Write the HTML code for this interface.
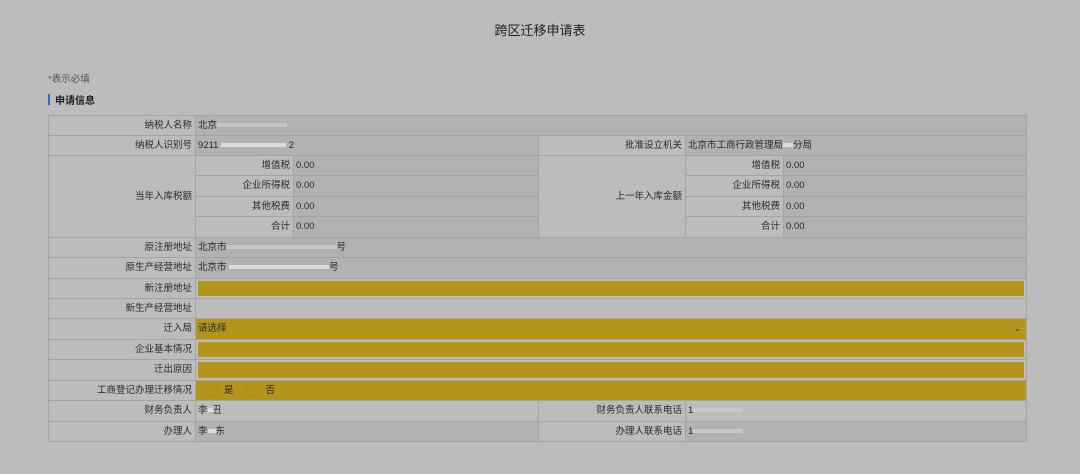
<!DOCTYPE html><html><head><meta charset="utf-8"><style>
body{margin:0;width:1080px;height:474px;background:#bcbcbc;font-family:"Liberation Sans","Noto Sans CJK SC",sans-serif;position:relative;overflow:hidden;color:#2a2a2a}
.c{position:absolute;box-sizing:border-box;border:1px solid #a4a4a4;font-size:9.5px;line-height:19px;white-space:nowrap;overflow:hidden}
.l{text-align:right;padding-right:3px;background:#bcbcbc}
.v{padding-left:2px;background:#bcbcbc}
.d{background:#b1b1b1}
.g{background:#b3951b}
.gi{position:absolute;left:2px;right:2px;top:2px;bottom:2px;background:#b3951b}
.w{display:inline-block;background:#dcdcdc;height:4px;vertical-align:middle}
</style></head><body>
<div style="position:absolute;top:20px;left:0;width:1080px;text-align:center;font-size:13px;color:#222">跨区迁移申请表</div>
<div style="position:absolute;top:71px;left:48px;font-size:9.5px;color:#555"><span style="color:#b33">*</span>表示必填</div>
<div style="position:absolute;top:94px;left:48px;width:2px;height:11px;background:#2b6fc0"></div>
<div style="position:absolute;top:92px;left:55px;font-size:10px;font-weight:bold;color:#222">申请信息</div>

<div class="c l" style="left:48px;top:115px;width:148px;height:21px">纳税人名称</div>
<div class="c v d" style="left:195px;top:115px;width:832px;height:21px">北京<span class="w" style="width:70px;background:#c4c4c4"></span></div>

<div class="c l" style="left:48px;top:135px;width:148px;height:21px">纳税人识别号</div>
<div class="c v d" style="left:195px;top:135px;width:344px;height:21px">9211 <span class="w" style="width:65px"></span> 2</div>
<div class="c l" style="left:538px;top:135px;width:148px;height:21px">批准设立机关</div>
<div class="c v d" style="left:685px;top:135px;width:342px;height:21px">北京市工商行政管理局<span class="w" style="width:10px"></span>分局</div>

<div class="c l" style="left:48px;top:155px;width:148px;height:83px;line-height:81px">当年入库税额</div>
<div class="c l" style="left:538px;top:155px;width:148px;height:83px;line-height:81px">上一年入库金额</div>

<div class="c l" style="left:195px;top:155px;width:99px;height:21px">增值税</div><div class="c v d" style="left:293px;top:155px;width:246px;height:21px">0.00</div>
<div class="c l" style="left:195px;top:175px;width:99px;height:22px">企业所得税</div><div class="c v d" style="left:293px;top:175px;width:246px;height:22px">0.00</div>
<div class="c l" style="left:195px;top:196px;width:99px;height:21px">其他税费</div><div class="c v d" style="left:293px;top:196px;width:246px;height:21px">0.00</div>
<div class="c l" style="left:195px;top:216px;width:99px;height:22px">合计</div><div class="c v d" style="left:293px;top:216px;width:246px;height:22px">0.00</div>
<div class="c l" style="left:685px;top:155px;width:99px;height:21px">增值税</div><div class="c v d" style="left:783px;top:155px;width:244px;height:21px">0.00</div>
<div class="c l" style="left:685px;top:175px;width:99px;height:22px">企业所得税</div><div class="c v d" style="left:783px;top:175px;width:244px;height:22px">0.00</div>
<div class="c l" style="left:685px;top:196px;width:99px;height:21px">其他税费</div><div class="c v d" style="left:783px;top:196px;width:244px;height:21px">0.00</div>
<div class="c l" style="left:685px;top:216px;width:99px;height:22px">合计</div><div class="c v d" style="left:783px;top:216px;width:244px;height:22px">0.00</div>

<div class="c l" style="left:48px;top:237px;width:148px;height:21px">原注册地址</div>
<div class="c v d" style="left:195px;top:237px;width:832px;height:21px">北京市<span class="w" style="width:110px;background:#c6c6c6"></span>号</div>
<div class="c l" style="left:48px;top:257px;width:148px;height:22px">原生产经营地址</div>
<div class="c v d" style="left:195px;top:257px;width:832px;height:22px">北京市 <span class="w" style="width:100px"></span>号</div>
<div class="c l" style="left:48px;top:278px;width:148px;height:21px">新注册地址</div>
<div class="c v" style="left:195px;top:278px;width:832px;height:21px"><div class="gi"></div></div>
<div class="c l" style="left:48px;top:298px;width:148px;height:21px">新生产经营地址</div>
<div class="c v" style="left:195px;top:298px;width:832px;height:21px"></div>
<div class="c l" style="left:48px;top:318px;width:148px;height:22px">迁入局</div>
<div class="c v g" style="left:195px;top:318px;width:832px;height:22px">请选择<span style="position:absolute;right:5px;top:0;font-size:9px">⌄</span></div>
<div class="c l" style="left:48px;top:339px;width:148px;height:21px">企业基本情况</div>
<div class="c v" style="left:195px;top:339px;width:832px;height:21px"><div class="gi"></div></div>
<div class="c l" style="left:48px;top:359px;width:148px;height:22px">迁出原因</div>
<div class="c v" style="left:195px;top:359px;width:832px;height:22px"><div class="gi"></div></div>
<div class="c l" style="left:48px;top:380px;width:148px;height:21px">工商登记办理迁移情况</div>
<div class="c v g" style="left:195px;top:380px;width:832px;height:21px"><span style="display:inline-block;width:12px;height:12px;border:1px solid #a88b22;border-radius:50%;vertical-align:middle;margin:0 6px 0 6px"></span>是<span style="display:inline-block;width:12px;height:12px;border:1px solid #a88b22;border-radius:50%;vertical-align:middle;margin:0 6px 0 12px"></span>否</div>
<div class="c l" style="left:48px;top:400px;width:148px;height:22px">财务负责人</div>
<div class="c v" style="left:195px;top:400px;width:344px;height:22px">李<span class="w" style="width:5px"></span>丑</div>
<div class="c l" style="left:538px;top:400px;width:148px;height:22px">财务负责人联系电话</div>
<div class="c v" style="left:685px;top:400px;width:342px;height:22px">1<span class="w" style="width:50px;background:#c8c8c8"></span></div>
<div class="c l" style="left:48px;top:421px;width:148px;height:21px">办理人</div>
<div class="c v d" style="left:195px;top:421px;width:344px;height:21px">李<span class="w" style="width:8px"></span>东</div>
<div class="c l" style="left:538px;top:421px;width:148px;height:21px">办理人联系电话</div>
<div class="c v d" style="left:685px;top:421px;width:342px;height:21px">1<span class="w" style="width:50px;background:#c8c8c8"></span></div>
</body></html>
